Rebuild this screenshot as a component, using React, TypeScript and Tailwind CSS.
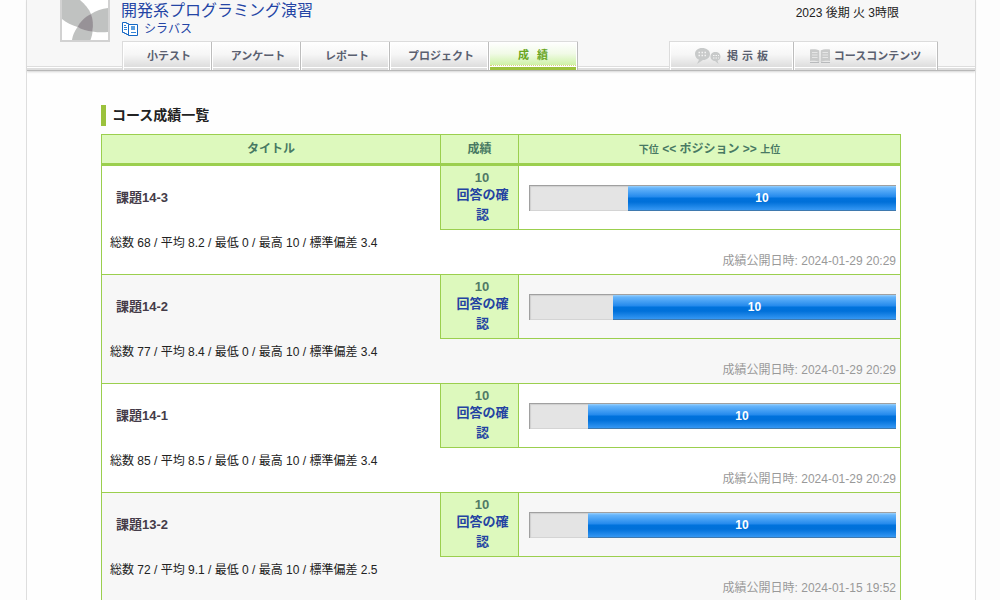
import type { ReactNode } from 'react';

type Grade = {
  title: string;
  stats: string;
  published: string;
  offset: number;
};

const grades: Grade[] = [
  { title: '課題14-3', stats: '総数 68 / 平均 8.2 / 最低 0 / 最高 10 / 標準偏差 3.4', published: '2024-01-29 20:29', offset: 99 },
  { title: '課題14-2', stats: '総数 77 / 平均 8.4 / 最低 0 / 最高 10 / 標準偏差 3.4', published: '2024-01-29 20:29', offset: 84 },
  { title: '課題14-1', stats: '総数 85 / 平均 8.5 / 最低 0 / 最高 10 / 標準偏差 3.4', published: '2024-01-29 20:29', offset: 59 },
  { title: '課題13-2', stats: '総数 72 / 平均 9.1 / 最低 0 / 最高 10 / 標準偏差 2.5', published: '2024-01-15 19:52', offset: 59 },
];

function CourseLogo() {
  return (
    <svg width="50" height="42" viewBox="0 0 50 42" className="block">
      <rect x="0" y="-8" width="50" height="50" fill="#d2d2d2" />
      <rect x="2" y="-6" width="46" height="46" fill="#fff" />
      <path d="M2 0H20C25 4 29 9 31 14L17.500 27C12 25.500 6 22.500 2 19Z" fill="#c0c2c1" />
      <path d="M48 8C42 8.500 36 10.500 31 14L32.500 31.500C38 32.500 43 32.500 48 32Z" fill="#c0c2c1" />
      <path d="M17.500 27C14.500 31 12.500 36 12 40H30.500C31.500 37 32.500 34 32.500 31Z" fill="#c0c2c1" />
      <path d="M31 14C25 17 20 22 17.500 27C22 29.500 27 31 32.500 31.500C33.300 25 33 19 31 14Z" fill="#979297" />
    </svg>
  );
}

function SyllabusIcon() {
  return (
    <svg width="18" height="16" viewBox="0 0 18 16" fill="none" stroke="#1467c4" className="block">
      <path d="M7.500 3.500V2.500H5.500V1.500H1.500V11.500H3.500V12.500H5.500V13.500H7.500V14.500H16.500V3.500Z" fill="#fff" />
      <path d="M7.500 3.500V14.500" />
      <path d="M3 4.500h2M3 6.500h3M3 8.500h3M10 11.500h5" stroke="#3284d8" />
      <rect x="10" y="5" width="4" height="4" fill="#5b9ede" stroke="none" />
    </svg>
  );
}

function ChatIcon() {
  return (
    <svg width="26" height="17" viewBox="0 0 26 17" className="block">
      <path d="M7 0C3 0 0 2.500 0 6C0 9 2 11 4 11.700L2 16L8 12C12 12 15 9.500 15 6C15 2.500 11.500 0 7 0Z" fill="#c8caca" />
      <path d="M20.500 4C17.500 4 15.500 6 15.500 8.800C15.500 11.500 18 13 20 13L23.500 16L22.500 12.700C24.500 12 25.500 10.500 25.500 8.700C25.500 6 23.500 4 20.500 4Z" fill="#c8caca" />
      <path d="M3.500 4.500h8M3.500 7.500h8" stroke="#f4f4f4" strokeWidth="1.500" strokeDasharray="1.500 1.500" />
      <path d="M18 7.500h6M18 10h6" stroke="#f4f4f4" strokeDasharray="1.500 1" />
    </svg>
  );
}

function BookIcon() {
  return (
    <svg width="20" height="14" viewBox="0 0 20 14" className="block">
      <path d="M0 .5C4 0 7.500 .5 9.300 1.500V13C7 12 4 11.500 0 12Z" fill="#c9caca" />
      <path d="M20 .5C16 0 12.500 .5 10.700 1.500V13C13 12 16 11.500 20 12Z" fill="#c9caca" />
      <path d="M2 3.500h5.500M2 6h5.500M2 8.500h5.500M12.500 3.500H18M12.500 6H18M12.500 8.500H18" stroke="#e6e6e6" />
      <path d="M0 13.500H9M11 13.500H20" stroke="#b8babc" />
    </svg>
  );
}

function Tab({ width, children }: { width: string; children: ReactNode }) {
  return (
    <div className={`${width} flex h-full flex-col border-r border-[#bdbdbd]`}>
      <div className="mx-px flex flex-1 items-center justify-center whitespace-nowrap bg-linear-to-b from-white via-[#f6f6f6] to-[#dddddd] pl-1 pt-[3px] text-[11px] font-bold text-[#5a6070]">
        {children}
      </div>
      <div className="mx-px mt-px h-[2px] bg-[#dedede]" />
    </div>
  );
}

function ActiveTab({ children }: { children: ReactNode }) {
  return (
    <div className="flex h-full w-[89px] flex-col border-r border-[#bdbdbd]">
      <div className="mx-px flex flex-1 items-center justify-center whitespace-nowrap border-b border-dotted border-[#d8d080] bg-linear-to-b from-white via-[#f1fae7] to-[#cef2a6] pt-1 text-[11px] font-bold text-[#69a51e]">
        {children}
      </div>
      <div className="mx-px mt-px h-[3px] bg-[#9bc23c]" />
    </div>
  );
}

function Header() {
  return (
    <header className="flex h-[71px] flex-col border-b border-[#b8b8b8] bg-[#f7f7f7] shadow-[0_1px_2px_#d5d5d5]">
      <div className="flex h-[41px] shrink-0 pl-[33px]">
        <CourseLogo />
        <div className="ml-[11px] flex-1">
          <h1 className="h-[21px] whitespace-nowrap text-[16px] leading-[21px] text-[#2445a5]">開発系プログラミング演習</h1>
          <div className="flex items-center gap-[5px] text-[12px] leading-4 text-[#2445a5]">
            <SyllabusIcon />
            <span>シラバス</span>
          </div>
        </div>
        <div className="mr-[76px] pt-1 text-[12px] leading-[18px]">2023 後期 火 3時限</div>
      </div>
      <div className="flex h-[29px] justify-between bg-[linear-gradient(to_bottom,transparent_25px,#ddd_25px,#ddd_26px,#fff_26px,#fff_27px,#dedede_27px)] pl-[95px] pr-[37px]">
        <nav className="flex border-l border-t border-[#dcdcdc] bg-white">
          <Tab width="w-[89px]">小テスト</Tab>
          <Tab width="w-[89px]">アンケート</Tab>
          <Tab width="w-[89px]">レポート</Tab>
          <Tab width="w-[99px]">プロジェクト</Tab>
          <ActiveTab>成<span className="w-2" />績</ActiveTab>
        </nav>
        <nav className="flex border-l border-t border-[#dcdcdc] bg-white">
          <Tab width="w-[124px]"><ChatIcon /><span className="ml-1.5 tracking-[4px]">掲示板</span></Tab>
          <Tab width="w-[144px]"><span className="-ml-1"><BookIcon /></span><span className="ml-1">コースコンテンツ</span></Tab>
        </nav>
      </div>
    </header>
  );
}

function PositionBar({ offset }: { offset: number }) {
  return (
    <div className="flex h-[26px] w-[367px] border-l border-t border-[#a0a0a0] bg-[#e4e4e4] shadow-[inset_1px_1px_1px_#cfcfcf,inset_0_-1px_#d4d4d4]">
      <div className="shrink-0" style={{ width: offset - 1 }} />
      <div className="flex-1 border-b border-[#3f79ae] bg-[linear-gradient(to_bottom,#9bd1fc_0px,#66b5fb_2px,#2389ec_11px,#0072dc_12px,#0070d9_16px,#3597f3_24px)] text-center text-[12px] font-bold leading-[25px] text-white">10</div>
    </div>
  );
}

function GradeRow({ grade, shaded }: { grade: Grade; shaded: boolean }) {
  return (
    <article className={`h-[109px] border-b border-[#9bcf4e] ${shaded ? 'bg-[#f7f7f7]' : 'bg-white'}`}>
      <div className="flex h-16">
        <h3 className="w-[338px] pl-[14px] pt-[22px] text-[13px] font-bold leading-5 text-[#443b48]">{grade.title}</h3>
        <div className="w-[79px] border-x border-b border-[#9bcf4e] bg-[#ddf9bd] pl-[6px] text-center text-[13px] font-bold">
          <div className="h-[19px] pr-[1px] pt-[2px] leading-5 text-[#507a66]">10</div>
          <a className="block whitespace-nowrap leading-5 text-[#2443a2]">回答の確<br />認</a>
        </div>
        <div className="flex-1 border-b border-[#9bcf4e] pl-[10px] pt-[19px]">
          <PositionBar offset={grade.offset} />
        </div>
      </div>
      <div className="pl-2 pt-1 text-[12px] leading-[18px]">{grade.stats}</div>
      <div className="pr-1 text-right text-[12px] leading-[18px] text-[#999]">成績公開日時: {grade.published}</div>
    </article>
  );
}

export default function App() {
  return (
    <div className="h-[600px] w-[1000px] overflow-hidden bg-[#fdfdfd] font-['Liberation_Sans','Noto_Sans_CJK_JP',sans-serif] text-[#222]">
      <div className="ml-[26px] h-full w-[950px] border-x border-[#dedede] bg-[#fefefe]">
        <Header />
        <main className="ml-[74px] w-[800px] pt-[34px]">
          <h2 className="h-[21px] border-l-[5px] border-[#9bc23c] pl-[6px] text-[14px] font-bold leading-[20px] text-[#222]">コース成績一覧</h2>
          <section className="mt-2 border-x border-t border-[#9bcf4e]">
            <div className="flex h-[31px] border-b-[3px] border-[#9bcf4e] bg-[#ddf9bd] text-center text-[12px] font-bold leading-[28px] text-[#487963]">
              <div className="w-[338px]">タイトル</div>
              <div className="w-[79px] border-x border-[#9bcf4e]">成績</div>
              <div className="flex-1"><span className="text-[10px]">下位</span> &lt;&lt; ポジション &gt;&gt; <span className="text-[10px]">上位</span></div>
            </div>
            {grades.map((grade, index) => (
              <GradeRow key={grade.title} grade={grade} shaded={index % 2 === 1} />
            ))}
          </section>
        </main>
      </div>
    </div>
  );
}
